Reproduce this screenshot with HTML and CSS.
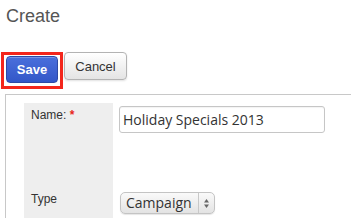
FILE: index.html
```html
<!DOCTYPE html>
<html>
<head>
<meta charset="utf-8">
<link rel="stylesheet" href="styles.css">
</head>
<body>
<h1 class="title">Create</h1>
<div class="actions">
  <div class="highlight"><button class="btn btn-save">Save</button></div>
  <button class="btn btn-cancel">Cancel</button>
</div>
<div class="panel">
  <div class="form">
    <div class="label row1">Name: <span class="req">*</span></div>
    <div class="field row1"><div class="input">Holiday Specials 2013</div></div>
    <div class="label row2">Type</div>
    <div class="field row2">
      <div class="select">
        <span class="sel-text">Campaign</span>
        <span class="sel-arrows">
          <svg width="7" height="11" viewBox="0 0 7 11"><path d="M3.5 1 L6 4.5 H1 Z" fill="#666"/><path d="M3.5 10 L6 6.5 H1 Z" fill="#666"/></svg>
        </span>
      </div>
    </div>
  </div>
</div>
</body>
</html>
```

FILE: styles.css
```css
html, body {
  margin: 0;
  padding: 0;
  background: #fff;
  width: 351px;
  height: 220px;
  overflow: hidden;
}
.title {
  margin: 0;
  padding: 5px 0 0 6px;
  height: 47px;
  box-sizing: border-box;
  font-family: "Liberation Sans", Arial, sans-serif;
  font-weight: normal;
  font-size: 18px;
  line-height: 22px;
  color: #555;
}
.actions {
  display: flex;
  align-items: flex-start;
  padding-left: 1px;
  height: 44px;
  box-sizing: border-box;
}
.highlight {
  width: 62px;
  height: 37px;
  box-sizing: border-box;
  border: 3px solid #f3261c;
  padding: 1px 0 0 2px;
  margin-top: 5px;
}
.btn {
  font-family: "Liberation Sans", Arial, sans-serif;
  font-size: 13px;
  box-sizing: border-box;
  border-radius: 4px;
  padding: 0;
  cursor: pointer;
}
.btn-save {
  width: 52px;
  height: 27px;
  color: #fff;
  font-weight: bold;
  border: 1px solid #2c4aa6;
  background: linear-gradient(#4a6fdc, #3357c8);
  box-shadow: inset 0 1px 0 rgba(255,255,255,0.25);
}
.btn-cancel {
  margin-left: 1px;
  margin-top: 5px;
  width: 63px;
  height: 28px;
  color: #333;
  border: 1px solid #b3b3b3;
  background: linear-gradient(#ffffff, #e4e4e4);
  box-shadow: 0 1px 2px rgba(0,0,0,0.12);
}
.panel {
  margin-left: 5px;
  margin-top: 3px;
  border-top: 1px solid #c8c8c8;
  border-left: 1px solid #c8c8c8;
  padding: 8px 0 0 18px;
  height: 124px;
  box-sizing: border-box;
  overflow: hidden;
}
.form {
  display: grid;
  grid-template-columns: 89px 1fr;
  grid-template-rows: 86px 29px;
  font-family: "Liberation Sans", Arial, sans-serif;
}
.label {
  background: #eeeeee;
  font-size: 12px;
  line-height: 15px;
  color: #333;
  padding-left: 7px;
}
.label.row1 { padding-top: 5px; }
.label.row2 { padding-top: 3px; }
.req { color: #e8261a; font-weight: bold; }
.field {
  padding-left: 6px;
}
.field.row1 { padding-top: 3px; }
.field.row2 { padding-top: 3px; }
.input {
  width: 206px;
  height: 27px;
  box-sizing: border-box;
  border: 1px solid #c6c6c6;
  border-radius: 3px;
  font-family: "Open Sans", sans-serif;
  font-size: 14px;
  line-height: 25px;
  color: #333;
  padding-left: 3px;
  box-shadow: inset 0 1px 1px rgba(0,0,0,0.05);
}
.select {
  display: flex;
  align-items: stretch;
  width: 95px;
  height: 22px;
  box-sizing: border-box;
  margin-left: 1px;
  border: 1px solid #c4c4c4;
  border-radius: 5px;
  background: linear-gradient(#fafafa, #e3e3e3);
  box-shadow: 0 1px 1px rgba(0,0,0,0.1);
  font-family: "Open Sans", sans-serif;
  font-size: 14px;
  color: #333;
}
.sel-text {
  width: 78px;
  box-sizing: border-box;
  padding-left: 5px;
  line-height: 20px;
  border-right: 1px solid #c8c8c8;
}
.sel-arrows {
  flex: 1;
  display: flex;
  align-items: center;
  justify-content: center;
}
.sel-arrows svg { display: block; }
```
